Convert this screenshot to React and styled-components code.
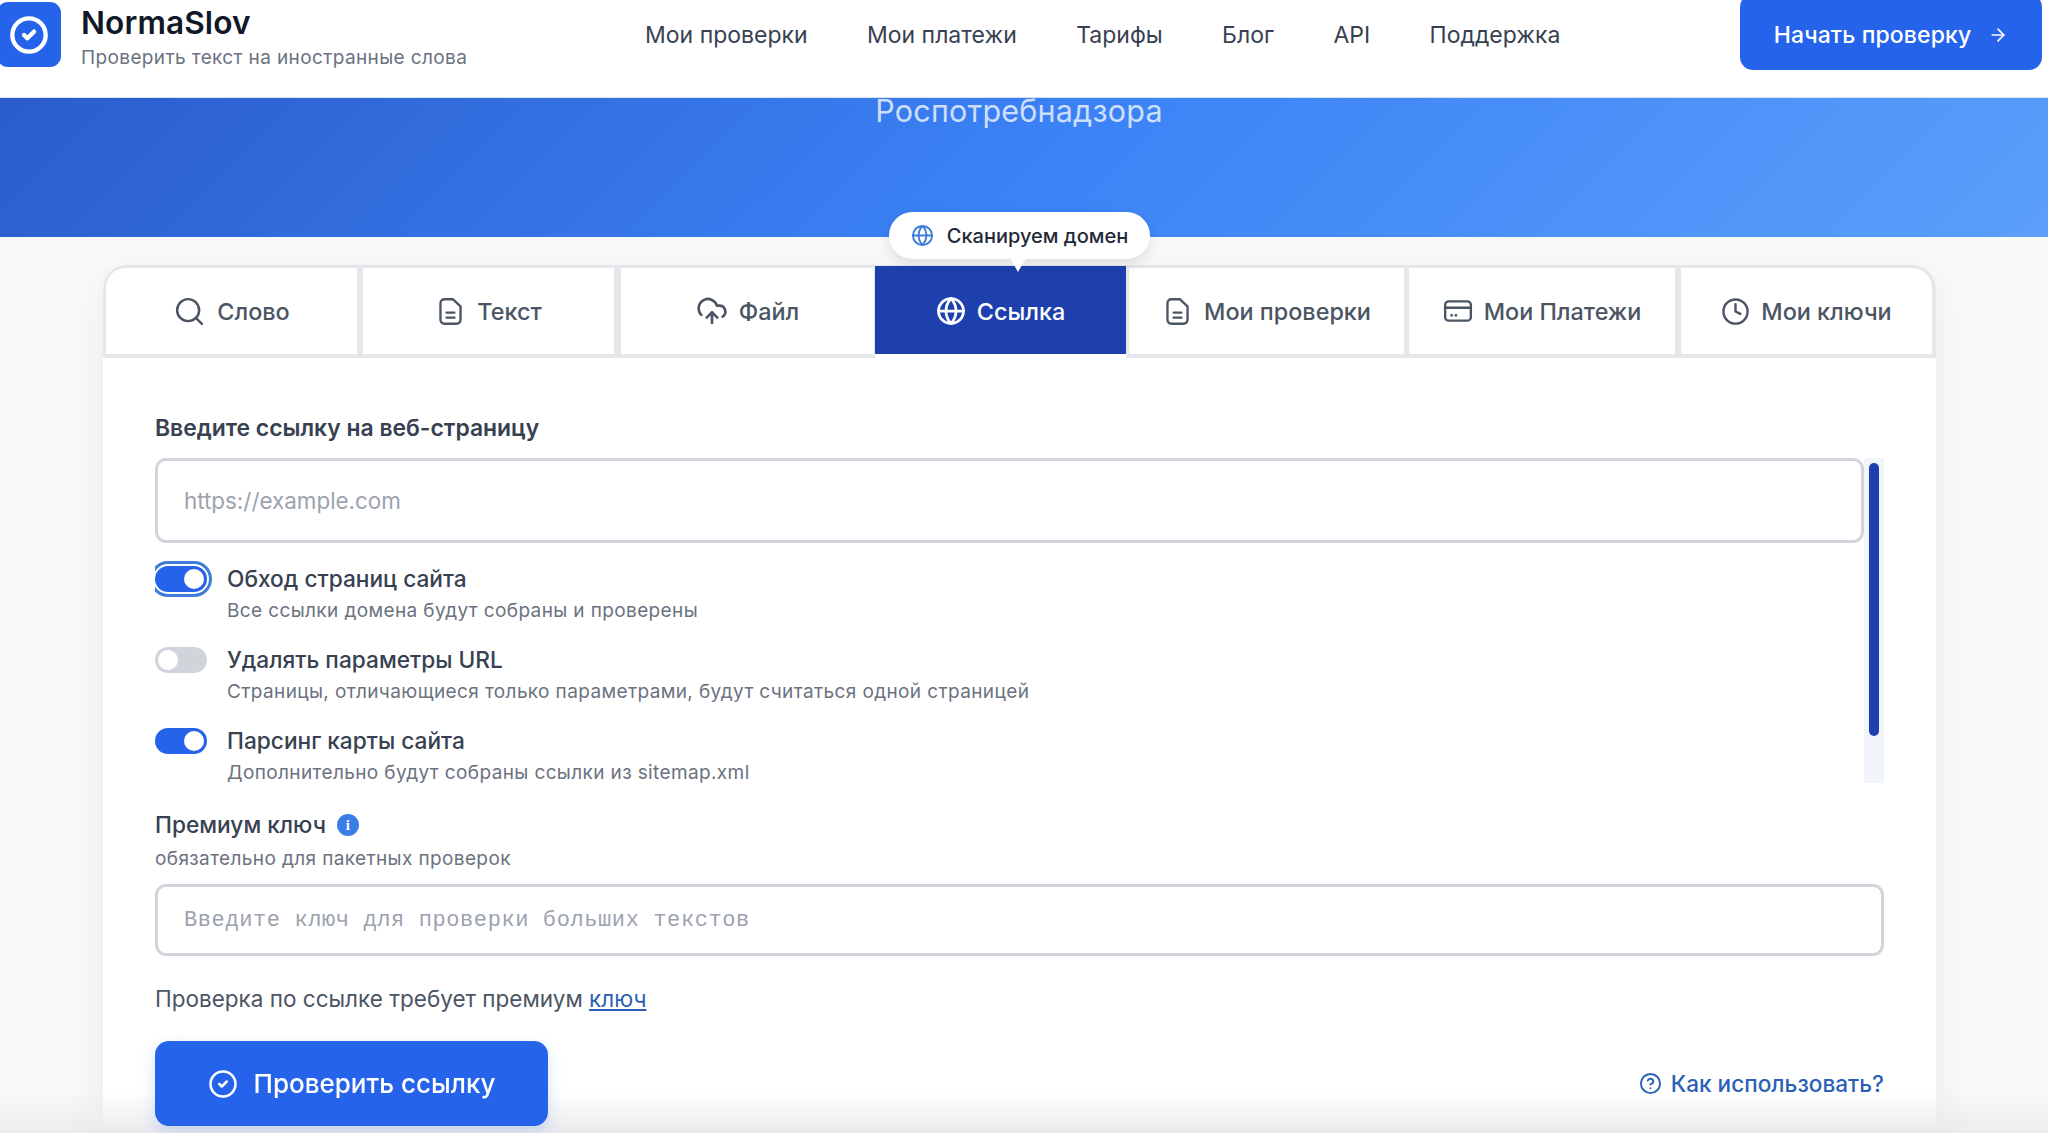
import styled, { createGlobalStyle } from 'styled-components'
import { ArrowRight, CircleCheck, CircleHelp, Clock, CloudUpload, Globe, Search } from 'lucide-react'

const GlobalStyle = createGlobalStyle`
    * { box-sizing: border-box; }
    html, body {
        margin: 0;
        height: 1133px;
        overflow: hidden;
        background: #f9fafb;
        font-family: Inter, "Noto Sans", sans-serif;
    }
`

const Header = styled.header`
    height: 98px;
    background: #fff;
    border-bottom: 1px solid #dbe3ee;
    display: flex;
    align-items: flex-start;
    position: relative;
    z-index: 2;
`

const Brand = styled.div`
    display: flex;
    gap: 20px;
    width: 648px;
    flex: none;
    margin-left: -3px;
    padding-top: 2px;
`

const LogoBox = styled.div`
    width: 64px;
    height: 65px;
    background: #2563eb;
    border-radius: 11px;
    display: flex;
    align-items: center;
    justify-content: center;
    color: #fff;
`

const BrandText = styled.div`
    display: flex;
    flex-direction: column;
`

const BrandName = styled.div`
    font-size: 31.6px;
    font-weight: 600;
    line-height: 41px;
    color: #111827;
    letter-spacing: 0.1px;
`

const BrandSub = styled.div`
    font-size: 19px;
    line-height: 26px;
    margin-top: 2px;
    color: #6b7280;
    letter-spacing: 0.38px;
`

const Nav = styled.nav`
    display: flex;
    gap: 59.4px;
    height: 70px;
    align-items: center;
    flex: 1;
`

const NavLink = styled.a`
    font-size: 23px;
    color: #374151;
`

const StartButton = styled.button`
    width: 302px;
    height: 76px;
    margin: -6px 6px 0 0;
    border: 0;
    border-radius: 13px;
    background: #2563eb;
    color: #fff;
    font: 500 23px Inter, sans-serif;
    letter-spacing: 0.1px;
    display: flex;
    align-items: center;
    justify-content: center;
    gap: 17px;
    padding-top: 6px;
    flex: none;
`

const Hero = styled.section`
    height: 139px;
    background: linear-gradient(135deg, #2b5ccb 0%, #3b82f6 50%, #5b9ffa 100%);
    overflow: hidden;
    text-align: center;
    padding-right: 10px;
`

const HeroText = styled.div`
    font-size: 30.5px;
    line-height: 36px;
    margin-top: -5px;
    color: rgba(255, 255, 255, 0.75);
    letter-spacing: 0.2px;
`

const Card = styled.main`
    width: 1833px;
    margin: 28px 0 0 103px;
    background: #fff;
    border-radius: 24px 24px 0 0;
    box-shadow: 0 10px 40px rgba(17, 24, 39, 0.07);
    position: relative;
`

const Tabs = styled.div`
    display: flex;
    height: 93px;
    background: #e5e7eb;
    border-radius: 24px 24px 0 0;
    padding: 3px 0 4px 3px;
`

const Tab = styled.div`
    width: ${p => p.$width}px;
    margin-left: ${p => p.$gap}px;
    margin-top: ${p => p.$active ? '-2px' : '0'};
    padding-top: ${p => p.$active ? '2px' : '0'};
    background: ${p => p.$active ? '#1e40af' : '#fff'};
    color: ${p => p.$active ? '#fff' : '#4b5563'};
    border-radius: ${p => p.$radius || '0'};
    font-size: 23.4px;
    font-weight: 500;
    display: flex;
    align-items: center;
    justify-content: center;
    gap: 11px;
    position: relative;

    ${p => p.$active && `
        &::after {
            content: '';
            position: absolute;
            left: 0;
            right: 0;
            bottom: -5px;
            height: 5px;
            background: #fff;
        }
    `}
`

const Bubble = styled.div`
    position: absolute;
    left: 786px;
    top: -53px;
    width: 261px;
    height: 47px;
    border-radius: 24px;
    background: #fff;
    box-shadow: 0 4px 14px rgba(17, 24, 39, 0.12);
    display: flex;
    align-items: center;
    justify-content: center;
    gap: 13px;
    font-size: 20px;
    font-weight: 500;
    color: #1f2937;
    z-index: 3;

    svg { color: #3b7dd8; }

    &::after {
        content: '';
        position: absolute;
        left: 121px;
        bottom: -13px;
        border-left: 8px solid transparent;
        border-right: 8px solid transparent;
        border-top: 14px solid #fff;
    }
`

const Form = styled.div`
    padding: 55px 52px 0;
`

const FieldLabel = styled.label`
    display: block;
    font-size: 22.9px;
    font-weight: 600;
    line-height: 30px;
    color: #374151;
    margin-bottom: 15px;
`

const ScrollRow = styled.div`
    display: flex;
    height: 325px;
`

const ScrollArea = styled.div`
    flex: 1;
    min-width: 0;
    overflow: hidden;
`

const ScrollTrack = styled.div`
    width: 20px;
    flex: none;
    padding: 5px;
    background: #f1f5f9;
`

const ScrollThumb = styled.div`
    height: 273px;
    border-radius: 5px;
    background: #1e40af;
`

const TextInput = styled.input`
    display: block;
    width: 100%;
    height: ${p => p.$height}px;
    border: 3px solid #d1d5db;
    border-radius: 11px;
    padding: 0 26px;
    font-family: ${p => p.$mono ? '"Liberation Mono", monospace' : 'Inter, sans-serif'};
    font-size: ${p => p.$mono ? '22px' : '22.4px'};
    letter-spacing: ${p => p.$mono ? '0.6px' : '0'};
    outline: none;
    background: #fff;

    &::placeholder { color: #9ca3af; opacity: 1; }
`

const OptionList = styled.div`
    display: flex;
    flex-direction: column;
    gap: 21px;
    margin-top: 21px;
`

const Option = styled.div`
    display: flex;
    gap: 20px;
`

const Toggle = styled.div`
    width: 52px;
    height: 26px;
    margin-top: 2px;
    border-radius: 13px;
    background: ${p => p.$on ? '#2563eb' : '#d1d5db'};
    box-shadow: ${p => p.$focus ? '0 0 0 2px #fff, 0 0 0 5px #3b7dd8' : 'none'};
    padding: 3px;
    display: flex;
    justify-content: ${p => p.$on ? 'flex-end' : 'flex-start'};
    flex: none;

    &::before {
        content: '';
        width: 20px;
        height: 20px;
        border-radius: 50%;
        background: #fff;
    }
`

const OptionText = styled.div`
    display: flex;
    flex-direction: column;
`

const OptionTitle = styled.div`
    font-size: 22.7px;
    font-weight: 500;
    line-height: 30px;
    color: #374151;
`

const OptionSub = styled.div`
    font-size: 19px;
    letter-spacing: 0.38px;
    line-height: 26px;
    margin-top: 4px;
    color: #6b7280;
`

const PremiumHead = styled.div`
    display: flex;
    align-items: center;
    gap: 11px;
    margin-top: 27px;
    font-size: 22.7px;
    font-weight: 500;
    line-height: 30px;
    color: #374151;
`

const InfoDot = styled.span`
    width: 22px;
    height: 22px;
    border-radius: 50%;
    background: #3b7de8;
    color: #fff;
    font: 700 15px "Liberation Serif", serif;
    display: flex;
    align-items: center;
    justify-content: center;
`

const PremiumSub = styled.div`
    font-size: 19px;
    letter-spacing: 0.38px;
    line-height: 24px;
    margin: 7px 0 13px;
    color: #6b7280;
`

const Notice = styled.p`
    margin: 28px 0 0;
    font-size: 22.5px;
    line-height: 30px;
    color: #4b5563;

    a {
        color: #2b5fb8;
        text-decoration: underline;
    }
`

const Actions = styled.div`
    display: flex;
    justify-content: space-between;
    align-items: center;
    margin-top: 27px;
`

const SubmitButton = styled.button`
    width: 393px;
    height: 85px;
    border: 0;
    border-radius: 14px;
    background: #2563eb;
    color: #fff;
    font: 500 26px Inter, sans-serif;
    display: flex;
    align-items: center;
    justify-content: center;
    gap: 16px;
    box-shadow: 0 6px 16px rgba(37, 99, 235, 0.18);
    position: relative;
    z-index: 5;
`

const HelpLink = styled.a`
    display: flex;
    align-items: center;
    gap: 9px;
    font-size: 22.6px;
    font-weight: 500;
    color: #2b5fb8;
`

const BottomFade = styled.div`
    position: fixed;
    left: 0;
    right: 0;
    bottom: 0;
    height: 42px;
    background: linear-gradient(rgba(232, 233, 235, 0), rgba(232, 233, 235, 0.9));
    pointer-events: none;
    z-index: 4;
`

const DocIcon = () => (
    <svg width="31" height="29" viewBox="-1.6 0 27.2 26" fill="none" stroke="currentColor" strokeWidth="2.1" strokeLinecap="round" strokeLinejoin="round">
        <path d="M6.5 2H14l7 6.5v12a3.5 3.5 0 0 1-3.5 3.5h-11A3.5 3.5 0 0 1 3 20.5v-15A3.5 3.5 0 0 1 6.5 2z" />
        <path d="M8.5 14h7M8.5 18.5h7" />
    </svg>
)

const PayIcon = () => (
    <svg width="30" height="26" viewBox="0 0 28 24" fill="none" stroke="currentColor" strokeWidth="2.2" strokeLinecap="round">
        <rect x="2" y="3" width="24" height="18" rx="3.5" />
        <path d="M2 9h24" />
        <path d="M8 16h.1M12 16h.1" strokeWidth="2.6" />
    </svg>
)

const tabs = [
    { label: 'Слово', width: 251, gap: 0, icon: <Search size={33} strokeWidth={1.8} />, radius: '20px 0 0 0' },
    { label: 'Текст', width: 251, gap: 6, icon: <DocIcon /> },
    { label: 'Файл', width: 253, gap: 7, icon: <CloudUpload size={32} strokeWidth={2} /> },
    { label: 'Ссылка', width: 251, gap: 1, icon: <Globe size={30} strokeWidth={2.2} />, active: true },
    { label: 'Мои проверки', width: 275, gap: 3, icon: <DocIcon /> },
    { label: 'Мои Платежи', width: 266, gap: 5, icon: <PayIcon /> },
    { label: 'Мои ключи', width: 251, gap: 6, icon: <Clock size={29} strokeWidth={2} />, radius: '0 20px 0 0' },
]

const navLinks = ['Мои проверки', 'Мои платежи', 'Тарифы', 'Блог', 'API', 'Поддержка']

const options = [
    { title: 'Обход страниц сайта', sub: 'Все ссылки домена будут собраны и проверены', on: true, focus: true },
    { title: 'Удалять параметры URL', sub: 'Страницы, отличающиеся только параметрами, будут считаться одной страницей', on: false },
    { title: 'Парсинг карты сайта', sub: 'Дополнительно будут собраны ссылки из sitemap.xml', on: true },
]

export default function App() {
    return (
        <>
            <GlobalStyle />
            <Header>
                <Brand>
                    <LogoBox>
                        <CircleCheck size={40} strokeWidth={2.6} />
                    </LogoBox>
                    <BrandText>
                        <BrandName>NormaSlov</BrandName>
                        <BrandSub>Проверить текст на иностранные слова</BrandSub>
                    </BrandText>
                </Brand>
                <Nav>
                    {navLinks.map(link => <NavLink key={link}>{link}</NavLink>)}
                </Nav>
                <StartButton>
                    Начать проверку
                    <ArrowRight size={20} strokeWidth={2} />
                </StartButton>
            </Header>
            <Hero>
                <HeroText>Роспотребнадзора</HeroText>
            </Hero>
            <Card>
                <Bubble>
                    <Globe size={23} strokeWidth={2} />
                    Сканируем домен
                </Bubble>
                <Tabs>
                    {tabs.map(tab => (
                        <Tab key={tab.label} $width={tab.width} $gap={tab.gap} $active={tab.active} $radius={tab.radius}>
                            {tab.icon}
                            {tab.label}
                        </Tab>
                    ))}
                </Tabs>
                <Form>
                    <FieldLabel>Введите ссылку на веб-страницу</FieldLabel>
                    <ScrollRow>
                        <ScrollArea>
                            <TextInput $height={85} placeholder="https://example.com" />
                            <OptionList>
                                {options.map(option => (
                                    <Option key={option.title}>
                                        <Toggle $on={option.on} $focus={option.focus} />
                                        <OptionText>
                                            <OptionTitle>{option.title}</OptionTitle>
                                            <OptionSub>{option.sub}</OptionSub>
                                        </OptionText>
                                    </Option>
                                ))}
                            </OptionList>
                        </ScrollArea>
                        <ScrollTrack>
                            <ScrollThumb />
                        </ScrollTrack>
                    </ScrollRow>
                    <PremiumHead>
                        Премиум ключ
                        <InfoDot>i</InfoDot>
                    </PremiumHead>
                    <PremiumSub>обязательно для пакетных проверок</PremiumSub>
                    <TextInput $height={72} $mono placeholder="Введите ключ для проверки больших текстов" />
                    <Notice>Проверка по ссылке требует премиум <a>ключ</a></Notice>
                    <Actions>
                        <SubmitButton>
                            <CircleCheck size={30} strokeWidth={2} />
                            Проверить ссылку
                        </SubmitButton>
                        <HelpLink>
                            <CircleHelp size={23} strokeWidth={2} />
                            Как использовать?
                        </HelpLink>
                    </Actions>
                </Form>
            </Card>
            <BottomFade />
        </>
    )
}
